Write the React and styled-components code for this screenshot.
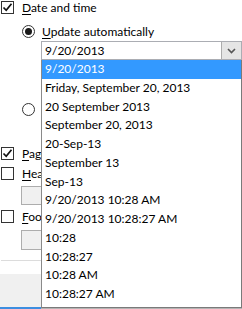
import React from "react";
import styled, { createGlobalStyle } from "styled-components";

const Global = createGlobalStyle`
  html, body { margin: 0; padding: 0; background: #fff; }
  body { font-family: Lato, "Noto Sans", sans-serif; font-size: 12px; color: #000; }
  * { box-sizing: border-box; }
`;

const Page = styled.div`
  position: relative;
  width: 242px;
  height: 309px;
  overflow: hidden;
  background: #fff;
`;

const Content = styled.div`
  display: flex;
  flex-direction: column;
  padding: 1px 0 0 1px;
`;

const Row = styled.div`
  display: flex;
  align-items: center;
  gap: ${(p) => p.$gap ?? 8}px;
  height: 13px;
  margin-top: ${(p) => p.$mt ?? 0}px;
  margin-left: ${(p) => p.$ml ?? 0}px;
  white-space: nowrap;
  line-height: 15px;
`;

const Box = styled.span`
  flex: none;
  width: 13px;
  height: 13px;
  border: 1px solid #333;
  background: #fff;
  display: flex;
  align-items: center;
  justify-content: center;
`;

const Radio = styled.span`
  flex: none;
  width: 13px;
  height: 13px;
  border: 1px solid #333;
  border-radius: 50%;
  background: #fff;
  display: flex;
  align-items: center;
  justify-content: center;
  &::after {
    content: "";
    display: ${(p) => (p.$on ? "block" : "none")};
    width: 7px;
    height: 7px;
    border-radius: 50%;
    background: #1a1a1a;
  }
`;

const Key = styled.span`
  text-decoration: underline;
  text-underline-offset: 2px;
`;

const Label = styled.span`
  color: #000;
`;

const Combo = styled.div`
  margin-top: 3px;
  margin-left: 40px;
  width: 201px;
  height: 19px;
  border: 1px solid #abadb3;
  display: flex;
  align-items: stretch;
  background: #fff;
`;

const ComboText = styled.div`
  flex: 1;
  padding-left: 3px;
  line-height: 17px;
`;

const ArrowBtn = styled.div`
  width: 20px;
  background: #e5e5e5;
  border-left: 1px solid #acacac;
  display: flex;
  align-items: center;
  justify-content: center;
`;

const Field = styled.div`
  margin-top: ${(p) => p.$mt}px;
  margin-left: 20px;
  width: 60px;
  height: ${(p) => p.$h}px;
  background: #f0f0f0;
  border: 1px solid #adadad;
`;

const Separator = styled.div`
  margin-top: 10px;
  height: 1px;
  background: #dcdcdc;
`;

const Footer = styled.div`
  margin-top: 13px;
  margin-left: -1px;
  height: 35px;
  background: #f0f0f0;
  border-bottom: 2px solid #3d8ee0;
`;

const List = styled.ul`
  position: absolute;
  left: 41px;
  top: 60px;
  width: 201px;
  height: 248px;
  margin: 0;
  padding: 0;
  list-style: none;
  background: #fff;
  border-left: 1px solid #8a8a8a;
  border-right: 1px solid #7a7a7a;
  border-bottom: 1px solid #7a7a7a;
  box-shadow: 0 1px 0 #b4b4b4;
`;

const Item = styled.li`
  height: 18.77px;
  line-height: 18.77px;
  padding-left: 3px;
  white-space: nowrap;
  background: ${(p) => (p.$sel ? "#3399ff" : "transparent")};
  color: ${(p) => (p.$sel ? "#fff" : "#000")};
`;

const Check = () => (
  <svg width="11" height="11" viewBox="0 0 11 11">
    <path d="M1.5 5.5 L4.2 8.3 L9.5 1.8" fill="none" stroke="#111" strokeWidth="1.7" />
  </svg>
);

const items = [
  "9/20/2013",
  "Friday, September 20, 2013",
  "20 September 2013",
  "September 20, 2013",
  "20-Sep-13",
  "September 13",
  "Sep-13",
  "9/20/2013 10:28 AM",
  "9/20/2013 10:28:27 AM",
  "10:28",
  "10:28:27",
  "10:28 AM",
  "10:28:27 AM",
];

export default function App() {
  return (
    <Page>
      <Global />
      <Content>
        <Row>
          <Box><Check /></Box>
          <Label><Key>D</Key>ate and time</Label>
        </Row>
        <Row $mt={11} $ml={21} $gap={7}>
          <Radio $on />
          <Label><Key>U</Key>pdate automatically</Label>
        </Row>
        <Combo>
          <ComboText>9/20/2013</ComboText>
          <ArrowBtn>
            <svg width="9" height="6" viewBox="0 0 9 6">
              <path d="M1 1 L4.5 4.5 L8 1" fill="none" stroke="#555" strokeWidth="1.6" />
            </svg>
          </ArrowBtn>
        </Combo>
        <Row $mt={43} $ml={21} $gap={7}>
          <Radio />
        </Row>
        <Row $mt={31}>
          <Box><Check /></Box>
          <Label><Key>P</Key>age number</Label>
        </Row>
        <Row $mt={7}>
          <Box />
          <Label><Key>H</Key>eader</Label>
        </Row>
        <Field $mt={6} $h={19} />
        <Row $mt={5}>
          <Box />
          <Label><Key>F</Key>ooter</Label>
        </Row>
        <Field $mt={7} $h={20} />
        <Separator />
        <Footer />
      </Content>
      <List>
        {items.map((t, i) => (
          <Item key={i} $sel={i === 0}>{t}</Item>
        ))}
      </List>
    </Page>
  );
}
